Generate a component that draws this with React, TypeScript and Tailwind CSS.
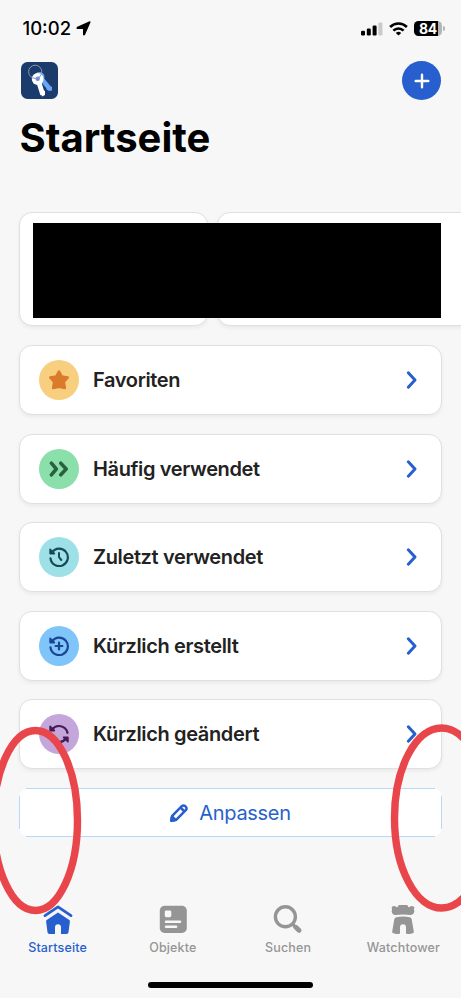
import type { ReactNode } from 'react';

const StarIcon = () => (
  <svg width="20" height="20" viewBox="0 0 20 20" fill="#dc7a2c" stroke="#dc7a2c" strokeWidth="2.6" strokeLinejoin="round">
    <path d="M10 1.6L12.7 6.5L18.7 7.5L14.8 12L15.8 17.9L10 16.7L4.2 17.9L5.2 12L1.3 7.5L7.3 6.5Z" />
  </svg>
);

const FastForwardIcon = () => (
  <svg width="20" height="20" viewBox="0 0 20 20" fill="none" stroke="#29603d" strokeWidth="3.5" strokeLinecap="round" strokeLinejoin="round">
    <path d="M2.4 4.2L7.3 10L2.4 15.8M11.8 4.2L17.2 10L11.8 15.8" />
  </svg>
);

// Counter-clockwise ring shared by the two history icons
const HistoryIcon = ({ color, children }: { color: string; children: ReactNode }) => (
  <svg width="20" height="20" viewBox="0 0 20 20" fill="none" stroke={color} strokeWidth="2.2" strokeLinecap="round" strokeLinejoin="round">
    <path d="M3 5.4A8.7 8.7 0 1 1 1.5 11.3" />
    <path d="M1.1 2.3V6.6H5.4Z" fill={color} strokeWidth="1.6" />
    {children}
  </svg>
);

const SyncIcon = () => (
  <svg width="20" height="20" viewBox="0 0 20 20" fill="none" stroke="#431b56" strokeWidth="2.2" strokeLinecap="round">
    <path d="M3.1 5.5A8.7 8.7 0 0 1 18.5 8.8M16.9 14.5A8.7 8.7 0 0 1 1.5 11.2" />
    <path d="M1.1 2.3V6.6H5.4ZM18.9 17.7V13.4H14.6Z" fill="#431b56" strokeWidth="1.6" strokeLinejoin="round" />
  </svg>
);

const rows = [
  { label: 'Favoriten', bg: 'bg-[#f8cf7f]', icon: <StarIcon /> },
  { label: 'Häufig verwendet', bg: 'bg-[#8adfab]', icon: <FastForwardIcon /> },
  {
    label: 'Zuletzt verwendet',
    bg: 'bg-[#9ee0e8]',
    icon: (
      <HistoryIcon color="#174a54">
        <path d="M10 6V10.2L12.3 13" strokeWidth="2" />
      </HistoryIcon>
    ),
  },
  {
    label: 'Kürzlich erstellt',
    bg: 'bg-[#7fc5fa]',
    icon: (
      <HistoryIcon color="#1b4494">
        <path d="M10 6.6V13.4M6.6 10H13.4" />
      </HistoryIcon>
    ),
  },
  { label: 'Kürzlich geändert', bg: 'bg-[#c5a6da]', icon: <SyncIcon /> },
];

const tabs = [
  {
    label: 'Startseite',
    active: true,
    icon: (
      <svg width="30" height="30" viewBox="0 0 30 30" fill="#285fce">
        <path d="M2 10.6L15 1.8L28 10.6" fill="none" stroke="#285fce" strokeWidth="2.8" strokeLinecap="round" strokeLinejoin="round" />
        <path d="M15 7.4L26.3 14.9C26.9 15.4 27 16 26.9 16.6L25.5 27.3Q25.3 29 23.5 29H18V22.3Q18 19.2 15 19.2T12 22.3V29H6.5Q4.7 29 4.5 27.3L3.1 16.6C3 16 3.1 15.4 3.7 14.9Z" />
      </svg>
    ),
  },
  {
    label: 'Objekte',
    icon: (
      <svg width="30" height="30" viewBox="0 0 30 30">
        <rect x="1.8" y="0.8" width="27" height="27.2" rx="4.8" fill="#959595" />
        <g fill="#f7f7f7">
          <rect x="6.8" y="5.4" width="6.5" height="6.8" rx="1.4" />
          <rect x="6.8" y="15.6" width="16.5" height="2.4" rx="1.2" />
          <rect x="6.8" y="20.5" width="12.5" height="2.4" rx="1.2" />
        </g>
      </svg>
    ),
  },
  {
    label: 'Suchen',
    icon: (
      <svg width="30" height="30" viewBox="0 0 30 30" fill="none" stroke="#959595" strokeLinecap="round">
        <circle cx="12.4" cy="11.8" r="10" strokeWidth="3.4" />
        <path d="M19.8 19.4L22 21.6" strokeWidth="3.2" />
        <path d="M22.8 22.3L26 25.3" strokeWidth="5" />
      </svg>
    ),
  },
  {
    label: 'Watchtower',
    icon: (
      <svg width="30" height="30" viewBox="0 0 30 30" fill="#959595">
        <path d="M11.5 0H18.5Q19.7 0 19.9 1.1C20.2 2.4 21.2 2.6 21.9 1.8Q23.5 .4 25.7 1.5Q26.7 2.2 26.2 3.3Q25.7 4.4 26.2 5.6C26.6 7.5 25.1 10.2 22.7 10Q15 9.1 7.3 10C4.9 10.2 3.4 7.5 3.8 5.6Q4.3 4.4 3.8 3.3Q3.3 2.2 4.3 1.5Q6.5 .4 8.1 1.8C8.8 2.6 9.8 2.4 10.1 1.1Q10.3 0 11.5 0Z" />
        <path d="M8.2 12.2Q15 10.8 21.8 12.2Q23.3 12.5 23.7 14.2L25.8 26.4Q26 27.8 24.6 28.2Q22 29.1 19.2 29.1Q18 29.1 18 27.8V22.2Q18 19.2 15 19.2T12 22.2V27.8Q12 29.1 10.8 29.1Q8 29.1 5.4 28.2Q4 27.8 4.2 26.4L6.3 14.2Q6.7 12.5 8.2 12.2Z" />
      </svg>
    ),
  },
];

function StatusBar() {
  return (
    <div className="flex h-[57px] shrink-0 items-center justify-between pl-[22.5px] pr-[16px] text-black">
      <div className="flex items-center gap-[5px]">
        <span className="text-[18.5px] font-medium leading-none">10:02</span>
        <svg width="15" height="15" viewBox="0 0 15 15">
          <path d="M13.9 1L8.4 13.4Q7.8 14.4 7.7 13V7.4H1.8Q.4 7.2 1.5 6.5Z" stroke="#000" strokeWidth="1.4" strokeLinejoin="round" />
        </svg>
      </div>
      <div className="flex items-center gap-[6px]">
        <svg width="22" height="14" viewBox="0 0 22 14">
          <rect x="0" y="8.8" width="4" height="4.7" rx="1.2" />
          <rect x="5.8" y="6.6" width="4" height="6.9" rx="1.2" />
          <rect x="11.6" y="3.6" width="4" height="9.9" rx="1.2" />
          <rect x="17.4" y=".6" width="4" height="12.9" rx="1.2" fill="#cacaca" />
        </svg>
        <svg width="19" height="14" viewBox="0 0 19 14" fill="none" stroke="#000" strokeWidth="2.6">
          <path d="M1.1 5A12 12 0 0 1 17.9 5M4.4 8.6A7.2 7.2 0 0 1 14.6 8.6" />
          <path d="M9.5 13.6L6.8 10.9Q9.5 8.7 12.2 10.9Z" fill="#000" stroke="none" />
        </svg>
        <div className="flex items-center gap-px">
          <div className="flex h-[15px] w-[28px] items-center justify-center rounded-[4.5px] bg-[linear-gradient(to_right,#000_84%,#b5b5b5_84%)] text-[14px] font-bold leading-none tracking-[-0.3px] text-white">
            84
          </div>
          <div className="h-[5px] w-[2px] rounded-r-full bg-[#b5b5b5]" />
        </div>
      </div>
    </div>
  );
}

function KeysLogo() {
  return (
    <svg width="37" height="37" viewBox="0 0 37 37">
      <rect width="37" height="37" rx="6.5" fill="#1b3b6c" />
      <circle cx="18.5" cy="15" r="5" fill="#69a7f5" />
      <path d="M19 15L28.5 26.5" stroke="#69a7f5" strokeWidth="4.5" />
      <path d="M25 27L31 24.5V28.5L28 29Z" fill="#69a7f5" />
      <path d="M17.5 19L21.7 32.5" stroke="#fff" strokeWidth="4.8" />
      <path d="M18.5 27L24 29V33L21 34.5Z" fill="#fff" />
      <circle cx="16.7" cy="17" r="5.9" fill="#fff" />
      <circle cx="16.7" cy="16.8" r="2.2" fill="#5996e9" />
      <circle cx="14.2" cy="9.8" r="6.6" fill="none" stroke="#8c98a9" strokeWidth="1" />
      <path d="M19 14.5L17 16.5" stroke="#8c98a9" />
    </svg>
  );
}

export default function App() {
  return (
    <div className="relative flex h-[998px] w-[461px] flex-col overflow-hidden bg-[#f7f7f7] font-['Inter',sans-serif] text-[#222]">
      <StatusBar />

      {/* Header */}
      <div className="mt-1 flex h-[39px] shrink-0 items-center justify-between pl-[21px] pr-5">
        <KeysLogo />
        <button className="flex size-[39px] items-center justify-center rounded-full bg-[#285fce]">
          <svg width="16" height="16" viewBox="0 0 16 16" stroke="#fff" strokeWidth="2.4" strokeLinecap="round">
            <path d="M8 1.7V14.3M1.7 8H14.3" />
          </svg>
        </button>
      </div>
      <h1 className="mt-[14px] shrink-0 pl-[19.5px] text-[40px] font-bold leading-[48px] text-black">Startseite</h1>

      {/* Pinned cards, contents blacked out */}
      <div className="relative mt-[50px] flex h-[114px] shrink-0 gap-[9px] pl-[19px]">
        <div className="w-[189px] shrink-0 rounded-[13px] border border-[#e0e0e0] bg-white shadow-[0_2px_4px_rgba(0,0,0,0.06)]" />
        <div className="w-[260px] shrink-0 rounded-[13px] border border-[#e0e0e0] bg-white shadow-[0_2px_4px_rgba(0,0,0,0.06)]" />
        <div className="absolute left-[33px] top-[11px] h-[95px] w-[408px] bg-black" />
      </div>

      {/* Sections */}
      <div className="mt-[19px] flex shrink-0 flex-col gap-[18.5px] px-[19px]">
        {rows.map((row) => (
          <div key={row.label} className="flex h-[70px] items-center rounded-[13px] border border-[#e0e0e0] bg-white pl-[19px] pr-[23px] shadow-[0_2px_4px_rgba(0,0,0,0.06)]">
            <div className={`flex size-[40px] items-center justify-center rounded-full ${row.bg}`}>{row.icon}</div>
            <span className="ml-[14px] flex-1 text-[20px] font-semibold leading-6 tracking-[-0.36px]">{row.label}</span>
            <svg width="12" height="20" viewBox="0 0 12 20" fill="none" stroke="#285fce" strokeWidth="3" strokeLinecap="round" strokeLinejoin="round">
              <path d="M2.3 2.8L9 10L2.3 17.2" />
            </svg>
          </div>
        ))}
      </div>

      {/* The border lines stop short of the rounded corners */}
      <div className="mt-[19px] shrink-0 px-[19px]">
        <button className="relative flex h-[49px] w-full items-center justify-center gap-[11px] rounded-[10px] bg-white text-[20px] tracking-[-0.3px] text-[#285fce]">
          <span className="absolute inset-x-[7px] top-0 h-px bg-[#b9d7fa]" />
          <span className="absolute inset-x-[7px] bottom-0 h-px bg-[#b9d7fa]" />
          <span className="absolute inset-y-[8px] left-0 w-px bg-[#b9d7fa]" />
          <span className="absolute inset-y-[8px] right-0 w-px bg-[#b9d7fa]" />
          <svg width="18" height="18" viewBox="0 0 18 18" fill="none" stroke="#285fce" strokeWidth="2.5" strokeLinejoin="round">
            <path d="M1.3 16.7L2.2 11.8L11.8 2.2Q13.6.6 15.5 2.4T15.8 6.2L6.2 15.8Z" />
            <path d="M1.3 16.7L2 12.5L5.5 16Z" fill="#285fce" />
            <path d="M10.5 3.5L14.5 7.5" />
          </svg>
          Anpassen
        </button>
      </div>

      {/* Tab bar */}
      <div className="mt-[68px] grid shrink-0 grid-cols-4">
        {tabs.map((tab) => (
          <div key={tab.label} className={`flex flex-col items-center gap-[5px] text-[12.5px] font-medium leading-4 tracking-[0.15px] ${tab.active ? 'text-[#285fce]' : 'text-[#959595]'}`}>
            {tab.icon}
            {tab.label}
          </div>
        ))}
      </div>
      <div className="mx-auto mt-[26px] h-[6px] w-[165px] shrink-0 rounded-full bg-black" />

      {/* Red markup over both ends of the button */}
      <svg className="pointer-events-none absolute inset-0" width="461" height="998" viewBox="0 0 461 998" fill="none" stroke="#e9464c" strokeWidth="7.4">
        <ellipse cx="35.5" cy="820.5" rx="42" ry="90" />
        <ellipse cx="441.5" cy="818" rx="47" ry="90" />
      </svg>
    </div>
  );
}
